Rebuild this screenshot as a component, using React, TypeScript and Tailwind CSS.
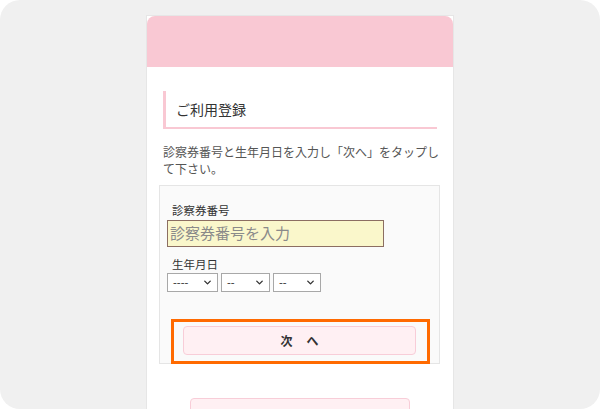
import { ChevronDown } from "lucide-react";

const font = { fontFamily: '"Noto Sans CJK JP", "Noto Sans", sans-serif' };

const Select = ({ w, label }: { w: string; label: string }) => (
    <div className={`${w} h-[19px] border border-[#a8a8a8] bg-white flex items-center justify-between pl-[5px] pr-[4px]`}>
        <span className="text-[11px] leading-none text-[#222]">{label}</span>
        <ChevronDown className="w-[11px] h-[11px] text-[#333]" strokeWidth={3} />
    </div>
);

export default function App() {
    return (
        <div className="w-[600px] h-[409px] bg-white" style={font}>
            <div className="w-full h-full rounded-[20px] bg-[#f0f0f0] overflow-hidden flex justify-center items-start pt-[15px]">
                <div className="w-[308px] bg-white border border-[#e6e6e6] pb-[40px]">
                    <div className="h-[51px] bg-[#f9c8d3] rounded-t-[8px]" />

                    <div className="px-[16px] pt-[24px]">
                        <div className="h-[38px] border-l-[3px] border-b-2 border-[#f9c8d3] flex items-center pl-[10px]">
                            <h1 className="text-[14px] text-[#333]">ご利用登録</h1>
                        </div>

                        <p className="mt-[14px] text-[12px] leading-[17px] text-[#555]">
                            <span className="whitespace-nowrap">診察券番号と生年月日を入力し「次へ」をタップし</span>
                            <br />
                            て下さい。
                        </p>

                        <div className="mt-[8px] -ml-[4px] w-[281px] bg-[#fafafa] border border-[#e5e5e5] pl-[7px] pt-[17px] pb-[8px]">
                            <div className="pl-[5px] text-[11.5px] leading-[14px] text-[#333]">診察券番号</div>
                            <div className="mt-[3px] w-[217px] h-[27px] bg-[#faf7cb] border border-[#8c6e62] flex items-center pl-[2px]">
                                <span className="text-[15px] text-[#8a8a8a]">診察券番号を入力</span>
                            </div>

                            <div className="mt-[10px] pl-[5px] text-[11.5px] leading-[14px] text-[#333]">生年月日</div>
                            <div className="mt-[2px] flex gap-[3px]">
                                <Select w="w-[51px]" label="----" />
                                <Select w="w-[49px]" label="--" />
                                <Select w="w-[48px]" label="--" />
                            </div>

                            <div className="relative mt-[34px] ml-[16px] mr-[23px]">
                                <div className="h-[29px] rounded-[4px] bg-[#fff0f3] border border-[#f8cdd8] flex items-center justify-center">
                                    <span className="text-[12px] font-bold text-[#333] tracking-[14px] pl-[14px]">次へ</span>
                                </div>
                                <div className="absolute -left-[12px] -right-[14px] -top-[7px] -bottom-[9px] border-[3px] border-[#ff6a00]" />
                            </div>
                        </div>

                        <div className="mt-[34px] mx-[27px] h-[30px] rounded-[4px] bg-[#fff0f3] border border-[#f8cdd8]" />
                    </div>
                </div>
            </div>
        </div>
    );
}
